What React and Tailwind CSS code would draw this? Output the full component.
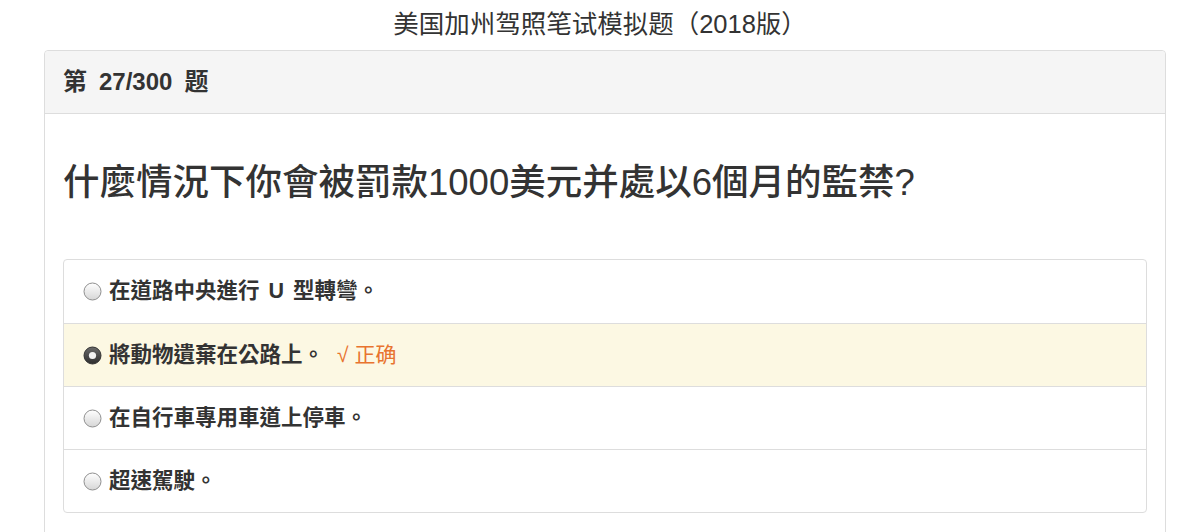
const OPTIONS = [
  { text: ['在道路中央進行 ', 'U', ' 型轉彎。'] },
  { text: ['將動物遺棄在公路上。'], correct: true },
  { text: ['在自行車專用車道上停車。'] },
  { text: ['超速駕駛。'] },
]

const FONT = '"Liberation Sans", "Noto Sans CJK TC", "Noto Sans CJK SC", sans-serif'

function Radio({ checked }) {
  return (
    <svg width="19" height="19" viewBox="0 0 19 19" className="shrink-0">
      <defs>
        <linearGradient id="rOff" x1="0" y1="0" x2="0" y2="1">
          <stop offset="0" stopColor="#ffffff" />
          <stop offset="1" stopColor="#d6d6d6" />
        </linearGradient>
        <linearGradient id="rOn" x1="0" y1="0" x2="0" y2="1">
          <stop offset="0" stopColor="#6a6a6a" />
          <stop offset="1" stopColor="#2e2e2e" />
        </linearGradient>
      </defs>
      {checked ? (
        <>
          <circle cx="9.5" cy="9.5" r="8.5" fill="url(#rOn)" stroke="#333" strokeWidth="1" />
          <circle cx="9.5" cy="9.5" r="3.6" fill="#f2f2f2" />
        </>
      ) : (
        <circle cx="9.5" cy="9.5" r="8.5" fill="url(#rOff)" stroke="#8f8f8f" strokeWidth="1" />
      )}
    </svg>
  )
}

export default function App() {
  return (
    <div className="w-[1200px] h-[532px] overflow-hidden bg-white text-[#333]" style={{ fontFamily: FONT }}>
      <h1 className="h-[48px] flex items-center justify-center text-[25.5px] text-[#333]">
        美国加州驾照笔试模拟题（2018版）
      </h1>

      {/* card */}
      <div className="ml-[44px] w-[1122px] mt-[2px] border border-[#ddd] rounded-[4px] h-[520px]">
        <div className="h-[63px] bg-[#f5f5f5] border-b border-[#ddd] rounded-t-[4px] px-[18px] flex items-center">
          <span className="text-[24px] font-bold text-[#333]">第{'\u2002'}27/300{'\u2002'}题</span>
        </div>

        <div className="px-[18px]">
          <h2 className="h-[145px] flex items-center text-[36.5px] font-medium text-[#333] pb-[6px]">
            什麼情況下你會被罰款1000美元并處以6個月的監禁?
          </h2>

          <div className="border border-[#ddd] rounded-[4px]">
            {OPTIONS.map((o, i) => (
              <div
                key={i}
                className={
                  'h-[63px] flex items-center gap-[7px] px-[19px] ' +
                  (i > 0 ? 'border-t border-[#ddd] ' : '') +
                  (o.correct ? 'bg-[#fcf8e3]' : '')
                }
              >
                <Radio checked={o.correct} />
                <span className="text-[21.5px] font-bold text-[#333] whitespace-pre">
                  {o.text.map((t, j) =>
                    t === 'U' ? <span key={j} className="px-[3px]">U</span> : <span key={j}>{t}</span>
                  )}
                </span>
                {o.correct && (
                  <span className="ml-[6px] text-[21px] text-[#e8742f]">√ 正确</span>
                )}
              </div>
            ))}
          </div>
        </div>
      </div>
    </div>
  )
}
